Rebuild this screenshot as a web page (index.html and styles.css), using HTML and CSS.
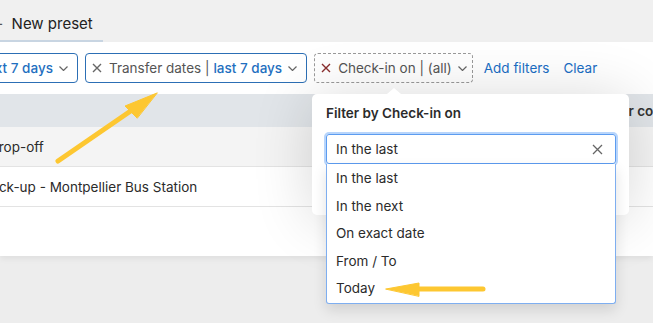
FILE: index.html
```html
<!DOCTYPE html>
<html lang="en">
<head>
    <meta charset="UTF-8">
    <meta name="viewport" content="width=device-width, initial-scale=1.0">
    <title>Bookings - Filters</title>
    <link rel="stylesheet" href="styles.css">
</head>
<body>
    <div class="topbar">
        <div class="tab"><span class="plus">+</span><span class="tab-name">New preset</span></div>
    </div>

    <div class="card">
        <div class="filters">
            <div class="chip chip-first">
                <span class="value">Next 7 days</span>
                <svg class="chev" width="9" height="5" viewBox="0 0 9 5"><path d="M0.5 0.5 L4.5 4.5 L8.5 0.5" fill="none" stroke="#666" stroke-width="1.2"/></svg>
            </div>
            <div class="chip">
                <svg class="remove" width="10" height="10" viewBox="0 0 10 10"><path d="M1 1 L9 9 M9 1 L1 9" stroke="#666" stroke-width="1.4"/></svg>
                <span class="label">Transfer dates |</span>
                <span class="value">last 7 days</span>
                <svg class="chev" width="9" height="5" viewBox="0 0 9 5"><path d="M0.5 0.5 L4.5 4.5 L8.5 0.5" fill="none" stroke="#666" stroke-width="1.2"/></svg>
            </div>
            <div class="chip chip-empty">
                <svg class="remove" width="10" height="10" viewBox="0 0 10 10"><path d="M1 1 L9 9 M9 1 L1 9" stroke="#8a2e2e" stroke-width="1.4"/></svg>
                <span class="label">Check-in on | (all)</span>
                <svg class="chev" width="9" height="5" viewBox="0 0 9 5"><path d="M0.5 0.5 L4.5 4.5 L8.5 0.5" fill="none" stroke="#666" stroke-width="1.2"/></svg>
            </div>
            <a class="link" href="#">Add filters</a>
            <a class="link" href="#">Clear</a>
        </div>

        <div class="table">
            <div class="thead">
                <span class="th-right">Driver contact</span>
            </div>
            <div class="row row-alt"><span class="cell">Drop-off</span></div>
            <div class="row"><span class="cell">Pick-up - Montpellier Bus Station</span></div>
        </div>
    </div>

    <!-- filter popover -->
    <div class="popover">
        <div class="popover-title">Filter by Check-in on</div>
        <div class="select">
            <span>In the last</span>
            <svg width="11" height="11" viewBox="0 0 11 11"><path d="M1 1 L10 10 M10 1 L1 10" stroke="#666" stroke-width="1.3"/></svg>
        </div>
    </div>

    <ul class="options">
        <li>In the last</li>
        <li>In the next</li>
        <li>On exact date</li>
        <li>From / To</li>
        <li>Today</li>
    </ul>

    <!-- annotation arrows -->
    <svg class="arrows" width="653" height="323" viewBox="0 0 653 323">
        <g fill="#fdc731" stroke="#fdc731" stroke-linecap="round" stroke-linejoin="round">
            <line x1="58" y1="161" x2="135" y2="108" stroke-width="5"/>
            <polygon points="157,93 125,106 137,118" stroke-width="1"/>
            <line x1="483" y1="289" x2="414" y2="289" stroke-width="5"/>
            <polygon points="386,289 419,283 419,296" stroke-width="1"/>
        </g>
    </svg>
</body>
</html>
```
FILE: styles.css
```css
body {
    font-family: Inter, "Noto Sans", sans-serif;
    margin: 0;
    padding: 0;
    width: 653px;
    height: 323px;
    overflow: hidden;
    position: relative;
    background: #ededed;
    color: #2b2b2b;
}
.topbar {
    height: 42px;
    background: #f0f0f0;
    display: flex;
    align-items: flex-end;
}
.tab {
    margin-left: -12px;
    width: 115px;
    flex-shrink: 0;
    height: 40px;
    box-sizing: border-box;
    padding-top: 4px;
    border-bottom: 2px solid #c8d5e2;
    display: flex;
    align-items: center;
    white-space: nowrap;
    font-size: 15px;
    color: #222;
}
.plus {
    color: #555;
    font-size: 16px;
    margin-left: 5px;
    margin-right: 8px;
    flex-shrink: 0;
}
.card {
    background: #fff;
    height: 214px;
    box-shadow: 0 3px 6px rgba(0, 0, 0, 0.06);
}
.filters {
    height: 52px;
    display: flex;
    align-items: center;
    font-size: 13.5px;
    white-space: nowrap;
}
.chip {
    height: 30px;
    flex-shrink: 0;
    box-sizing: border-box;
    border: 1px solid #2c6fb5;
    border-radius: 4px;
    padding: 0 9px 0 6px;
    margin-right: 7px;
    display: flex;
    align-items: center;
    color: #555;
}
.chip-first {
    margin-left: -30px;
}
.chip-empty {
    border: 1px dashed #9a9a9a;
    padding-right: 5px;
    margin-right: 11px;
}
.remove {
    margin-right: 7px;
}
.label {
    margin-right: 4px;
}
.chip-empty .label {
    margin-right: 0;
}
.value {
    color: #1f6fc0;
    font-weight: 500;
}
.chev {
    margin-left: 6px;
}
.link {
    color: #1a6ec4;
    text-decoration: none;
    margin-right: 14px;
}
.table {
    font-size: 13.5px;
}
.thead {
    height: 33px;
    background: #e1e5e9;
    display: flex;
    align-items: center;
    font-weight: 600;
}
.th-right {
    margin-left: 594px;
    color: #333;
    white-space: nowrap;
}
.row {
    height: 40px;
    box-sizing: border-box;
    border-bottom: 1px solid #e3e3e3;
    display: flex;
    align-items: center;
}
.row-alt {
    background: #f4f4f4;
}
.cell {
    margin-left: -11px;
}
.row + .row .cell {
    margin-left: -13px;
}
.popover {
    position: absolute;
    left: 312px;
    top: 94px;
    width: 317px;
    height: 121px;
    box-sizing: border-box;
    background: #fff;
    border-radius: 5px;
    box-shadow: 0 4px 60px rgba(0, 0, 0, 0.16);
    padding: 11px 13px 0 14px;
}
.popover::before {
    content: "";
    position: absolute;
    left: 75px;
    top: -6px;
    border-left: 7px solid transparent;
    border-right: 7px solid transparent;
    border-bottom: 6px solid #fff;
}
.popover-title {
    font-size: 13.5px;
    font-weight: 600;
    color: #2b2b2b;
    height: 18px;
}
.select {
    margin-top: 11px;
    height: 30px;
    box-sizing: border-box;
    border: 1px solid #5c9cf0;
    border-radius: 3px;
    box-shadow: 0 0 0 2px #b8d5fb;
    display: flex;
    align-items: center;
    justify-content: space-between;
    padding: 0 12px 0 9px;
    font-size: 13.5px;
}
.options {
    position: absolute;
    left: 326px;
    top: 164px;
    width: 290px;
    box-sizing: border-box;
    margin: 0;
    padding: 0;
    list-style: none;
    background: #fff;
    border: 1px solid #7eaef0;
    border-top: 0;
    border-radius: 0 0 3px 3px;
    box-shadow: 0 6px 14px rgba(0, 0, 0, 0.12);
    font-size: 13.5px;
}
.options li {
    height: 27.6px;
    line-height: 27.6px;
    padding-left: 9px;
    color: #2b2b2b;
}
.options li:first-child {
    margin-top: 1px;
}
.arrows {
    position: absolute;
    left: 0;
    top: 0;
    pointer-events: none;
}
```
